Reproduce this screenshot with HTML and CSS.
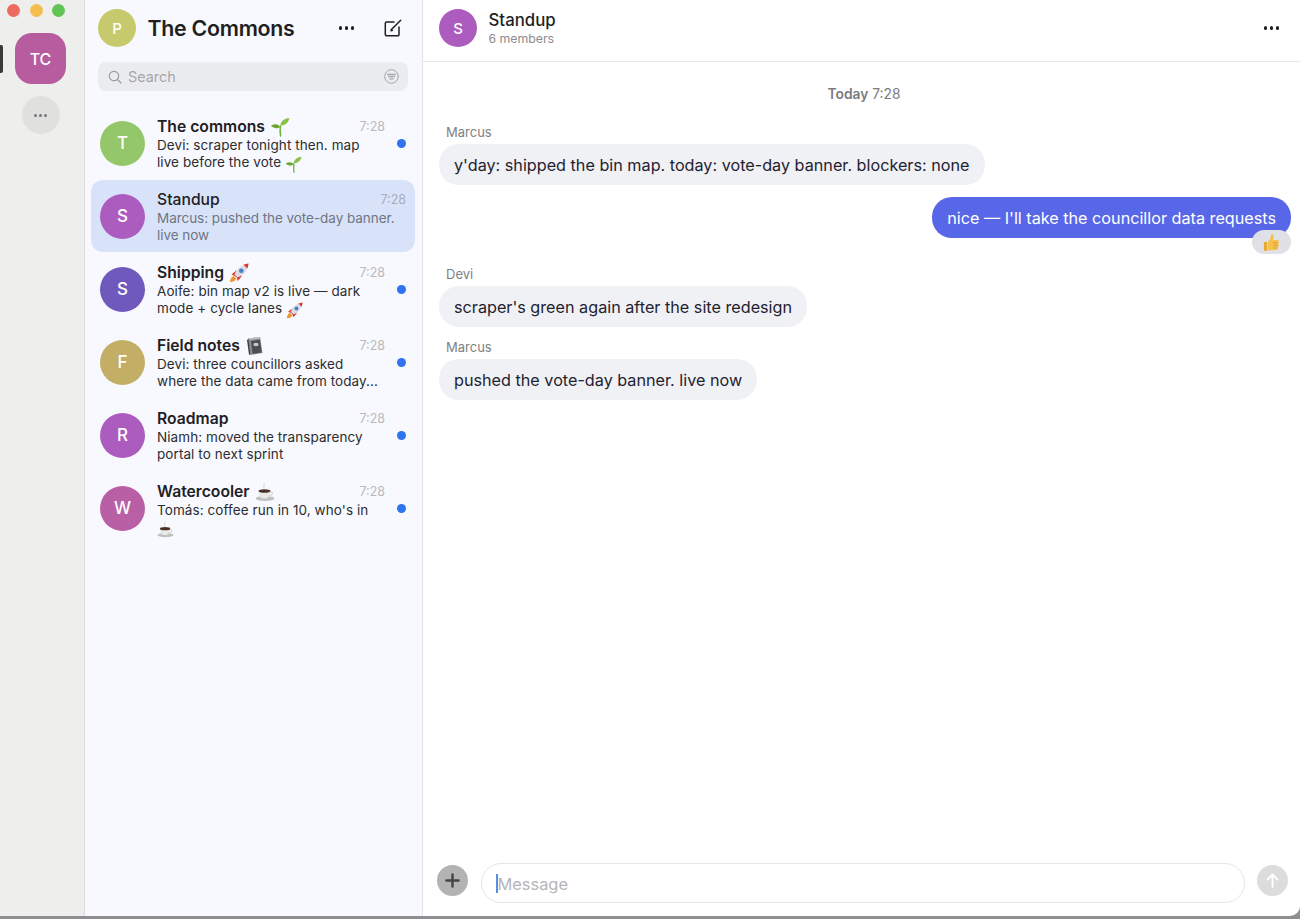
FILE: index.html
```html
<!DOCTYPE html>
<html lang="en">
<head>
<meta charset="UTF-8">
<meta name="viewport" content="width=device-width, initial-scale=1.0">
<title>The Commons</title>
<link rel="stylesheet" href="styles.css">
</head>
<body>
  <!-- emoji drawings, no emoji font on the box -->
  <svg class="sprites" aria-hidden="true">
    <symbol id="e-sprout" viewBox="0 0 20 20">
      <path d="M10.6 19c-.5-4-.6-7-.2-10" fill="none" stroke="#6fb53c" stroke-width="1.6" stroke-linecap="round"/>
      <path d="M10 10C8.500 6.800 4.500 6.300 .8 8.800c2.800 2.700 6.800 3.300 9.200 1.200z" fill="#6aa72f"/>
      <path d="M10.300 8.500C10.800 4.300 14.300 1.500 19.300 1c-.6 4.600-4.300 7.800-9 7.500z" fill="#86c144"/>
    </symbol>
    <symbol id="e-rocket" viewBox="0 0 20 20">
      <path d="M1 19c.2-3.400 1.500-5.400 3.700-6l2.500 2.500C6.500 17.700 4.500 18.900 1 19z" fill="#f0932b"/>
      <path d="M2.500 11.500l4.800-4 5.500 5.500-4 5-1.200-3.400-1.700-1.700z" fill="#d8382e"/>
      <path d="M5.500 11.500C7.500 6 12.500 1.500 19.500 .5c-.8 7-5 12-11 14z" fill="#d9dde6"/>
      <path d="M14.500 1.700c1.500-.5 3.300-1 5-1.200-.2 1.700-.5 3.400-1.100 5z" fill="#d8382e"/>
      <circle cx="12.300" cy="7.700" r="2.300" fill="#4a7fc4"/>
    </symbol>
    <symbol id="e-notebook" viewBox="0 0 20 20">
      <path d="M3 2.500L15 1l2.500 16L5.500 19z" fill="#8a8d8e"/>
      <path d="M3 2.500L15 1l1 1.500L5 4z" fill="#b9bcbc"/>
      <path d="M3.500 3l2 16-1.500-.5L2 4z" fill="#3b3d40"/>
      <path d="M6 5l9-1.200 1.600 12.700-9 1.200z" fill="#4b4e52"/>
      <ellipse cx="11" cy="8.500" rx="2.600" ry="1.700" fill="#c9cbcc"/>
    </symbol>
    <symbol id="e-coffee" viewBox="0 0 20 20">
      <ellipse cx="10" cy="16.500" rx="9.500" ry="2.500" fill="#bfc2c3"/>
      <path d="M3.500 9h12c0 4.500-2 7.500-6 7.500S3.500 13.500 3.500 9z" fill="#e9e9e7"/>
      <path d="M15 10.200c2.500-.8 3.600 1.700 1 3l-1.700.6" fill="none" stroke="#d5d5d3" stroke-width="1.200"/>
      <ellipse cx="9.500" cy="9" rx="6" ry="1.800" fill="#4c3024"/>
      <path d="M9 6.500C8 5 10 4 9 1.500" fill="none" stroke="#d9dadb" stroke-width="1.200"/>
    </symbol>
    <symbol id="e-thumb" viewBox="0 0 20 20">
      <path d="M2 9.500h3.300V19H3.500C2.600 19 2 18.400 2 17.500z" fill="#e8a93a"/>
      <path d="M6 9.500c2-2 3.400-4.500 3.400-7.200 0-1.700 3-1.700 3 1.300 0 1.300-.4 2.600-.9 3.700h4.900c1.800 0 1.900 2.400.6 2.900 1.100.7 1 2.300-.1 2.800.9.800.6 2.200-.4 2.600.5 1.100-.2 2.400-1.600 2.400H9.500C8 18.900 6.900 18.500 6 18z" fill="#f6c24f"/>
      <path d="M11.500 10.200h5.200M11.800 13h5M12 15.700h3.900" stroke="#d9962b" stroke-width=".8" fill="none"/>
    </symbol>
  </svg>

  <div class="window">
    <div class="rail">
      <div class="lights">
        <span class="light light-red"></span>
        <span class="light light-yellow"></span>
        <span class="light light-green"></span>
      </div>
      <div class="workspace-wrap">
        <span class="workspace-mark"></span>
        <div class="workspace">TC</div>
      </div>
      <div class="rail-more"><span></span><span></span><span></span></div>
    </div>

    <div class="sidebar">
      <div class="side-head">
        <div class="avatar avatar-38 c-olive">P</div>
        <h1 class="side-title">The Commons</h1>
        <div class="dots side-dots"><span></span><span></span><span></span></div>
        <svg class="compose" viewBox="0 0 18 18" width="18" height="18" fill="none" stroke="#1f1f1f" stroke-width="1.500" stroke-linecap="round" stroke-linejoin="round">
          <path d="M10 3H2.500A1.200 1.200 0 0 0 1.300 4.200v11.300a1.200 1.200 0 0 0 1.200 1.200h11.300a1.200 1.200 0 0 0 1.200-1.200V8"/>
          <path d="M7.500 10.500L16.700 1.300"/>
          <path d="M7.500 10.500l-.4 1.300 1.300-.4"/>
        </svg>
      </div>

      <div class="search">
        <svg class="search-icon" viewBox="0 0 14 14" width="14" height="14" fill="none" stroke="#9a9ca1" stroke-width="1.200" stroke-linecap="round">
          <circle cx="6" cy="6" r="4.700"/>
          <path d="M9.500 9.500l3.500 3.500"/>
        </svg>
        <span class="search-text">Search</span>
        <svg class="filter-icon" viewBox="0 0 15 15" width="15" height="15" fill="none" stroke="#a4a6ab" stroke-width="1" stroke-linecap="round">
          <circle cx="7.500" cy="7.500" r="6.800"/>
          <path d="M3.500 5.500h8M4.700 7.700h5.600M6 9.900h3" stroke-width="1.300"/>
        </svg>
      </div>

      <ul class="rooms">
        <li class="room unread">
          <div class="avatar avatar-45 c-green">T</div>
          <div class="room-body">
            <div class="room-top">
              <span class="room-name">The commons <svg class="emoji emoji-name"><use href="#e-sprout"/></svg></span>
              <span class="room-time">7:28</span>
            </div>
            <p class="room-preview">Devi: scraper tonight then. map live before the vote <svg class="emoji"><use href="#e-sprout"/></svg></p>
          </div>
          <span class="unread-dot"></span>
        </li>
        <li class="room selected">
          <div class="avatar avatar-45 c-purple">S</div>
          <div class="room-body">
            <div class="room-top">
              <span class="room-name room-name-plain">Standup</span>
              <span class="room-time">7:28</span>
            </div>
            <p class="room-preview">Marcus: pushed the vote-day banner. live now</p>
          </div>
        </li>
        <li class="room unread">
          <div class="avatar avatar-45 c-indigo">S</div>
          <div class="room-body">
            <div class="room-top">
              <span class="room-name">Shipping <svg class="emoji emoji-name"><use href="#e-rocket"/></svg></span>
              <span class="room-time">7:28</span>
            </div>
            <p class="room-preview">Aoife: bin map v2 is live — dark mode + cycle lanes <svg class="emoji"><use href="#e-rocket"/></svg></p>
          </div>
          <span class="unread-dot"></span>
        </li>
        <li class="room unread">
          <div class="avatar avatar-45 c-gold">F</div>
          <div class="room-body">
            <div class="room-top">
              <span class="room-name">Field notes <svg class="emoji emoji-name"><use href="#e-notebook"/></svg></span>
              <span class="room-time">7:28</span>
            </div>
            <p class="room-preview">Devi: three councillors asked<br>where the data came from today...</p>
          </div>
          <span class="unread-dot"></span>
        </li>
        <li class="room unread">
          <div class="avatar avatar-45 c-purple">R</div>
          <div class="room-body">
            <div class="room-top">
              <span class="room-name">Roadmap</span>
              <span class="room-time">7:28</span>
            </div>
            <p class="room-preview">Niamh: moved the transparency portal to next sprint</p>
          </div>
          <span class="unread-dot"></span>
        </li>
        <li class="room unread">
          <div class="avatar avatar-45 c-pink">W</div>
          <div class="room-body">
            <div class="room-top">
              <span class="room-name">Watercooler <svg class="emoji emoji-name"><use href="#e-coffee"/></svg></span>
              <span class="room-time">7:28</span>
            </div>
            <p class="room-preview">Tomás: coffee run in 10, who's in<br><svg class="emoji"><use href="#e-coffee"/></svg></p>
          </div>
          <span class="unread-dot"></span>
        </li>
      </ul>
    </div>

    <div class="main">
      <div class="main-head">
        <div class="avatar avatar-38 c-purple">S</div>
        <div class="main-info">
          <div class="main-title">Standup</div>
          <div class="main-sub">6 members</div>
        </div>
        <div class="dots main-dots"><span></span><span></span><span></span></div>
      </div>

      <div class="messages">
        <div class="day"><b>Today</b> 7:28</div>

        <div class="sender">Marcus</div>
        <div class="bubble">y'day: shipped the bin map. today: vote-day banner. blockers: none</div>

        <div class="bubble mine">nice — I'll take the councillor data requests
          <span class="reaction"><svg class="emoji-react"><use href="#e-thumb"/></svg></span>
        </div>

        <div class="sender sender-gap">Devi</div>
        <div class="bubble">scraper's green again after the site redesign</div>

        <div class="sender sender-gap-small">Marcus</div>
        <div class="bubble">pushed the vote-day banner. live now</div>
      </div>

      <div class="composer">
        <div class="plus">
          <svg viewBox="0 0 16 16" width="15" height="15" stroke="#444" stroke-width="2.600" stroke-linecap="round"><path d="M8 1.500v13M1.500 8h13"/></svg>
        </div>
        <div class="input"><span class="caret"></span><span class="placeholder">Message</span></div>
        <div class="send">
          <svg viewBox="0 0 14 16" width="13" height="15" fill="none" stroke="#fff" stroke-width="2" stroke-linecap="round" stroke-linejoin="round"><path d="M7 15V1.500M1.500 7L7 1.500 12.500 7"/></svg>
        </div>
      </div>
    </div>
  </div>
</body>
</html>
```

FILE: styles.css
```css
* {
  box-sizing: border-box;
}

html, body {
  margin: 0;
  padding: 0;
  height: 919px;
  overflow: hidden;
}

body {
  font-family: Inter, "Liberation Sans", sans-serif;
  background-color: #8f8f8f;
  color: #1f2024;
}

.sprites {
  display: none;
}

.window {
  display: flex;
  height: 916px;
  background-color: #fff;
  border-radius: 0 0 10px 0;
  overflow: hidden;
}

/* far left rail */
.rail {
  width: 85px;
  flex: none;
  background-color: #eeeeec;
  border-right: 1px solid #dcdcdc;
  display: flex;
  flex-direction: column;
  align-items: center;
  padding-top: 4px;
}

.lights {
  align-self: flex-start;
  display: flex;
  gap: 9.500px;
  padding-left: 7px;
}

.light {
  width: 13px;
  height: 13px;
  border-radius: 50%;
}

.light-red { background-color: #ee6a5f; }
.light-yellow { background-color: #f5bd4f; }
.light-green { background-color: #61c454; }

.workspace-wrap {
  align-self: stretch;
  display: flex;
  align-items: center;
  margin-top: 16px;
}

.workspace-mark {
  width: 2.500px;
  height: 28px;
  background-color: #3a3a3a;
  border-radius: 0 2px 2px 0;
}

.workspace {
  width: 51px;
  height: 51px;
  margin-left: 12.500px;
  border-radius: 17px;
  background-color: #b65c9f;
  color: #fff;
  font-size: 16px;
  font-weight: 500;
  display: flex;
  align-items: center;
  justify-content: center;
}

.rail-more {
  width: 38px;
  height: 38px;
  margin-top: 12px;
  margin-right: 3px;
  border-radius: 50%;
  background-color: #e0e0df;
  display: flex;
  align-items: center;
  justify-content: center;
  gap: 2px;
}

.rail-more span {
  width: 3px;
  height: 3px;
  border-radius: 50%;
  background-color: #77777a;
}

/* room list */
.sidebar {
  width: 338px;
  flex: none;
  background-color: #f8f9fe;
  border-right: 1px solid #e2e3e8;
  padding: 9px 7px 0 6px;
}

.side-head {
  display: flex;
  align-items: center;
  padding: 0 6px 0 7px;
  height: 38px;
}

.side-title {
  margin: 0 0 0 11.500px;
  font-size: 21.300px;
  font-weight: 600;
  letter-spacing: -0.25px;
  color: #1f1f1f;
}

.dots {
  display: flex;
  gap: 2.500px;
}

.dots span {
  width: 3.500px;
  height: 3.500px;
  border-radius: 50%;
  background-color: #1f1f1f;
}

.side-dots {
  margin-left: auto;
}

.compose {
  margin-left: 30px;
  margin-right: 7px;
}

.search {
  margin: 15px 7px 0 7px;
  height: 29px;
  background-color: #ebecf0;
  border-radius: 8px;
  display: flex;
  align-items: center;
  padding: 0 9px 0 10px;
}

.search-text {
  margin-left: 6px;
  font-size: 14.400px;
  color: #a6a7ab;
}

.filter-icon {
  margin-left: auto;
}

.rooms {
  list-style-type: none;
  margin: 16px 0 0;
  padding: 0;
  display: flex;
  flex-direction: column;
  gap: 1px;
}

.room {
  height: 72px;
  display: flex;
  align-items: center;
  padding: 0 9px;
  border-radius: 12px;
}

.room.selected {
  background-color: #d8e3fa;
}

.avatar {
  flex: none;
  border-radius: 50%;
  color: #fff;
  display: flex;
  align-items: center;
  justify-content: center;
  font-weight: 500;
}

.avatar-38 {
  width: 38px;
  height: 38px;
  font-size: 15px;
}

.avatar-45 {
  width: 45px;
  height: 45px;
  font-size: 17px;
}

.c-olive { background-color: #c6c96c; }
.c-green { background-color: #94c66a; }
.c-purple { background-color: #ac5cbe; }
.c-indigo { background-color: #7059bc; }
.c-gold { background-color: #c3ae65; }
.c-pink { background-color: #b95fa6; }

.room-body {
  flex: 1;
  min-width: 0;
  align-self: flex-start;
  margin: 9px 0 0 12px;
}

.room-top {
  display: flex;
  justify-content: space-between;
  align-items: center;
  height: 21px;
}

.room-name {
  font-size: 15.700px;
  font-weight: 600;
  color: #1f2024;
  display: flex;
  align-items: center;
  gap: 5px;
}

.room-name-plain {
  font-weight: 500;
}

.room-time {
  font-size: 12.500px;
  color: #b9babd;
}

.selected .room-time {
  color: #a9aebb;
}

.room-preview {
  margin: 0;
  padding-right: 6px;
  font-size: 13.500px;
  letter-spacing: 0.08px;
  line-height: 17px;
  color: #2c2d30;
}

.selected .room-preview {
  padding-right: 0;
  letter-spacing: -0.05px;
  color: #6f7583;
}

.emoji {
  width: 17px;
  height: 17px;
  margin: -3px 0;
  vertical-align: -3px;
}

.emoji-name {
  width: 20px;
  height: 20px;
}

.unread-dot {
  width: 9px;
  height: 9px;
  flex: none;
  margin-left: 12px;
  border-radius: 50%;
  background-color: #2f74ee;
}

/* conversation */
.main {
  flex: 1;
  min-width: 0;
  display: flex;
  flex-direction: column;
}

.main-head {
  height: 62px;
  flex: none;
  display: flex;
  align-items: center;
  padding: 0 21px 5px 16px;
  border-bottom: 1px solid #e6e6e8;
}

.main-info {
  margin-left: 12px;
}

.main-title {
  font-size: 16.800px;
  font-weight: 500;
  line-height: 20px;
  color: #1f1f1f;
  margin-left: -0.500px;
}

.main-sub {
  font-size: 12.300px;
  line-height: 17px;
  color: #8c8c90;
  margin-left: -0.500px;
}

.main-dots {
  margin-left: auto;
}

.messages {
  flex: 1;
  display: flex;
  flex-direction: column;
  align-items: flex-start;
  padding: 23px 9px 0 16px;
}

.day {
  align-self: center;
  font-size: 13.800px;
  line-height: 18px;
  color: #7b7b7f;
  margin-bottom: 21px;
  margin-right: 2px;
}

.day b {
  font-weight: 600;
}

.sender {
  font-size: 13px;
  line-height: 16px;
  color: #7f7f83;
  margin-bottom: 4px;
  margin-left: 7px;
}

.sender-gap {
  margin-top: 28px;
}

.sender-gap-small {
  margin-top: 12px;
}

.bubble {
  font-size: 16.200px;
  line-height: 21px;
  padding: 11px 15px 9px;
  border-radius: 20px;
  background-color: #f0f1f5;
  color: #1f2230;
}

.bubble.mine {
  position: relative;
  align-self: flex-end;
  margin-top: 12px;
  background-color: #5867e8;
  color: #fff;
}

.reaction {
  position: absolute;
  right: 0;
  bottom: -16px;
  width: 39px;
  height: 24px;
  border-radius: 12px;
  background-color: #dfe1e6;
  display: flex;
  align-items: center;
  justify-content: center;
}

.emoji-react {
  width: 19px;
  height: 19px;
}

.composer {
  flex: none;
  display: flex;
  align-items: center;
  height: 40px;
  margin-bottom: 13px;
  padding: 0 12px 0 14px;
}

.plus,
.send {
  width: 31px;
  height: 31px;
  flex: none;
  margin-bottom: 5px;
  border-radius: 50%;
  display: flex;
  align-items: center;
  justify-content: center;
}

.plus {
  background-color: #b3b3b3;
}

.send {
  background-color: #dcdcdc;
}

.input {
  flex: 1;
  height: 40px;
  margin: 0 12px 0 13px;
  border: 1px solid #e6e6e8;
  border-radius: 20px;
  display: flex;
  align-items: center;
  padding: 1px 0 0 14px;
}

.caret {
  width: 1.500px;
  height: 19px;
  background-color: #5a8cf0;
}

.placeholder {
  font-size: 16.400px;
  color: #b5b5b8;
}
```
